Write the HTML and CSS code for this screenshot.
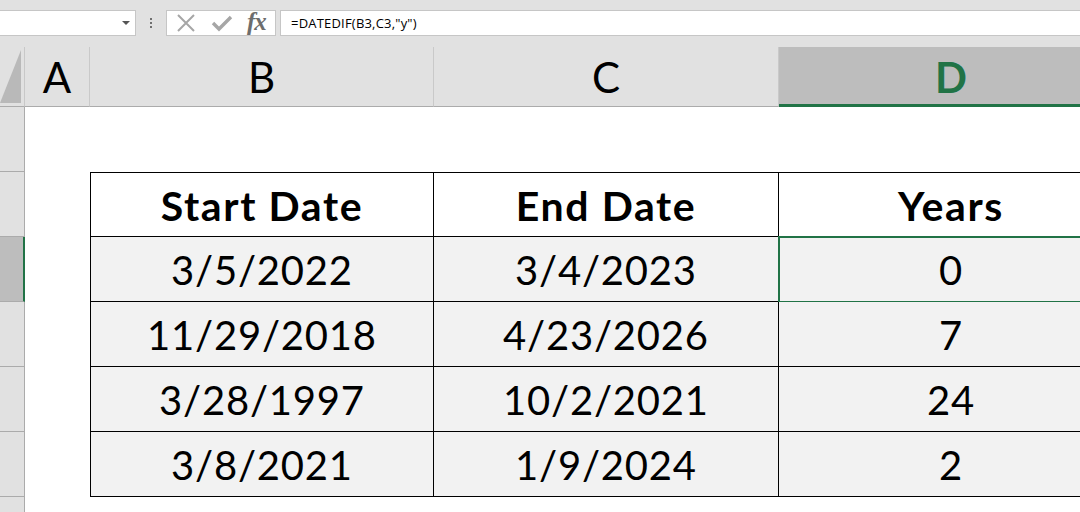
FILE: index.html
```html
<!DOCTYPE html>
<html lang="en">
<head>
<meta charset="utf-8">
<title>DATEDIF</title>
<link rel="stylesheet" href="styles.css">
</head>
<body>
<div class="app">
  <div class="fbar">
    <div class="namebox"><span class="caret"></span></div>
    <div class="grip"><i></i><i></i><i></i></div>
    <div class="iconbox">
      <svg class="ic" width="20" height="20" viewBox="0 0 20 20"><path d="M2 2 L18 18 M18 2 L2 18" stroke="#a6a6a6" stroke-width="2" fill="none"/></svg>
      <svg class="ic" width="22" height="20" viewBox="0 0 22 20"><path d="M2 10 L8 16 L20 4" stroke="#a6a6a6" stroke-width="3.4" fill="none"/></svg>
      <span class="fx">fx</span>
    </div>
    <div class="formula">=DATEDIF(B3,C3,"y")</div>
  </div>
  <div class="sheet">
    <div class="corner"><span class="tri"></span></div>
    <div class="ch">A</div>
    <div class="ch">B</div>
    <div class="ch">C</div>
    <div class="ch sel">D</div>

    <div class="rh"></div>
    <div class="c"></div><div class="c"></div><div class="c"></div><div class="c"></div>

    <div class="rh"></div>
    <div class="c"></div>
    <div class="t th first top">Start Date</div>
    <div class="t th top">End Date</div>
    <div class="t th top">Years</div>

    <div class="rh rsel"></div>
    <div class="c"></div>
    <div class="t first">3/5/2022</div>
    <div class="t">3/4/2023</div>
    <div class="t active">0</div>

    <div class="rh"></div>
    <div class="c"></div>
    <div class="t first">11/29/2018</div>
    <div class="t">4/23/2026</div>
    <div class="t">7</div>

    <div class="rh"></div>
    <div class="c"></div>
    <div class="t first">3/28/1997</div>
    <div class="t">10/2/2021</div>
    <div class="t">24</div>

    <div class="rh"></div>
    <div class="c"></div>
    <div class="t first">3/8/2021</div>
    <div class="t">1/9/2024</div>
    <div class="t">2</div>

    <div class="rh"></div>
    <div class="c"></div><div class="c"></div><div class="c"></div><div class="c"></div>
  </div>
</div>
</body>
</html>
```

FILE: styles.css
```css
html, body {
  margin: 0;
  padding: 0;
  background: #e1e1e1;
  overflow: hidden;
}
.app {
  width: 1080px;
  height: 512px;
  overflow: hidden;
  font-family: Lato, "Open Sans", sans-serif;
}
.fbar {
  height: 47px;
  box-sizing: border-box;
  padding-top: 10px;
  display: flex;
  align-items: flex-start;
}
.namebox {
  width: 136px;
  height: 26px;
  box-sizing: border-box;
  background: #fff;
  border: 1px solid #c6c6c6;
  border-left: none;
  display: flex;
  justify-content: flex-end;
  align-items: center;
  padding-right: 4px;
}
.caret {
  width: 0;
  height: 0;
  border-left: 4px solid transparent;
  border-right: 4px solid transparent;
  border-top: 4px solid #555;
  margin-right: 1px;
}
.grip {
  width: 30px;
  height: 26px;
  display: flex;
  flex-direction: column;
  align-items: center;
  justify-content: center;
  gap: 2px;
}
.grip i {
  width: 2px;
  height: 2px;
  background: #6f6f6f;
}
.iconbox {
  width: 110px;
  height: 26px;
  box-sizing: border-box;
  background: #fff;
  border: 1px solid #c6c6c6;
  display: flex;
  align-items: center;
  padding-left: 9px;
}
.ic { display: block; }
.ic + .ic { margin-left: 15px; }
.fx {
  font-family: "Liberation Serif", serif;
  font-style: italic;
  font-weight: bold;
  font-size: 25px;
  color: #6d6d6d;
  letter-spacing: -1px;
  margin-left: 14px;
  line-height: 22px;
  margin-top: -2px;
}
.formula {
  margin-left: 4px;
  flex: 1;
  height: 26px;
  box-sizing: border-box;
  background: #fff;
  border: 1px solid #c6c6c6;
  border-right: none;
  font-family: "Open Sans", Lato, sans-serif;
  font-size: 13px;
  line-height: 24px;
  padding-left: 10px;
  color: #000;
  letter-spacing: 0.2px;
}
.sheet {
  display: grid;
  grid-template-columns: 25px 65px 344px 345px 345px;
  grid-template-rows: 60px repeat(7, 65px);
  background: #fff;
}
.corner {
  background: #e1e1e1;
  border-right: 1px solid #c8c8c8;
  border-bottom: 1px solid #ababab;
  display: flex;
  align-items: flex-end;
  padding: 0 3px 3px 0;
  box-sizing: border-box;
}
.tri {
  display: block;
  width: 0;
  height: 0;
  border-left: 21px solid transparent;
  border-bottom: 53px solid #b9b9b9;
}
.ch {
  background: #e1e1e1;
  border-right: 1px solid #c9c9c9;
  border-bottom: 1px solid #ababab;
  box-sizing: border-box;
  display: flex;
  align-items: center;
  justify-content: center;
  font-size: 42px;
  color: #000;
}
.ch.sel {
  background: #bdbdbd;
  border-bottom: 3px solid #217346;
  color: #217346;
  font-weight: bold;
  padding-top: 2px;
}
.rh {
  background: #e1e1e1;
  border-right: 1px solid #ababab;
  border-bottom: 1px solid #ababab;
  box-sizing: border-box;
}
.rh.rsel {
  background: #bdbdbd;
  border-right: 2px solid #217346;
}
.c { background: #fff; }
.t {
  background: #f2f2f2;
  border-right: 1px solid #000;
  border-bottom: 1px solid #000;
  box-sizing: border-box;
  display: flex;
  align-items: center;
  justify-content: center;
  font-size: 40px;
  color: #000;
  padding-top: 1px;
  letter-spacing: 0.8px;
}
.t.first { border-left: 1px solid #000; }
.t.top { border-top: 1px solid #000; }
.t.th {
  background: #fff;
  font-weight: bold;
  font-size: 41px;
  letter-spacing: 1.6px;
}
.t.active {
  outline: 2px solid #217346;
  outline-offset: -1px;
}
```
